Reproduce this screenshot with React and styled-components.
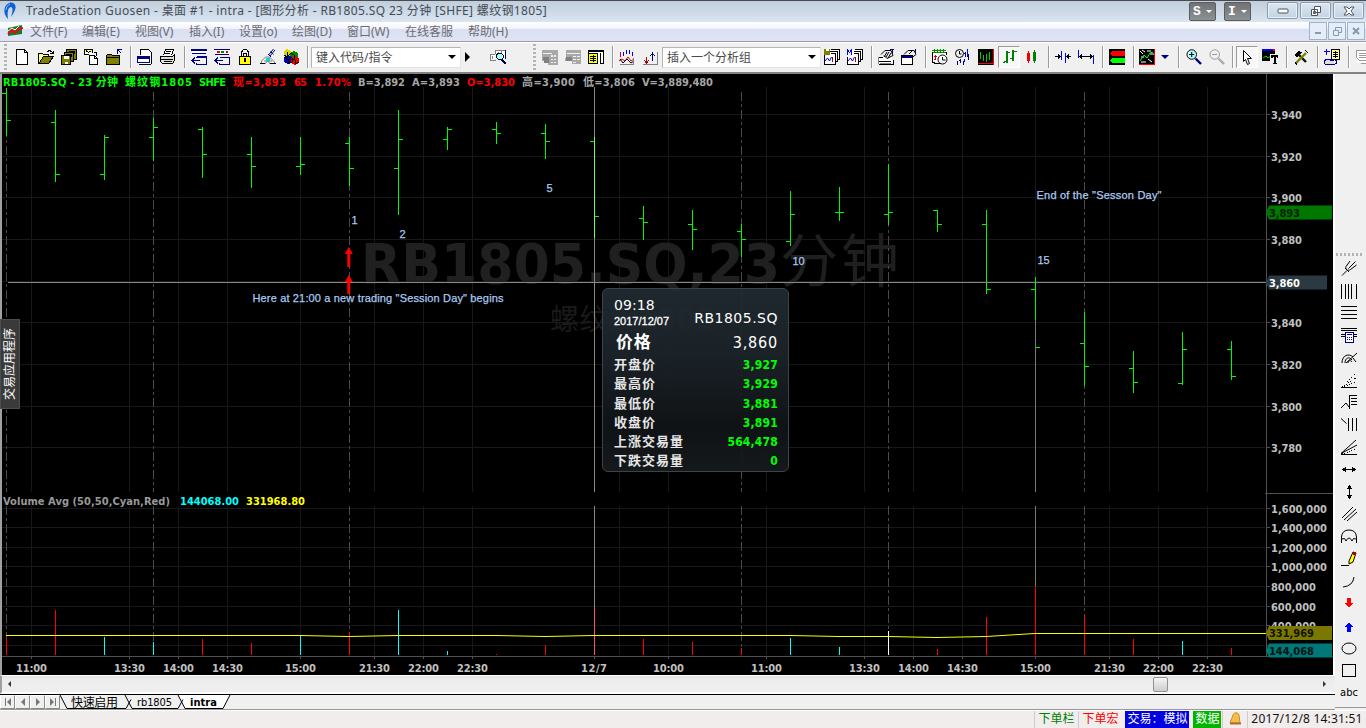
import React from "react";
import styled, { createGlobalStyle, css } from "styled-components";

const Global = createGlobalStyle`
  * { box-sizing: border-box; }
  body { margin: 0; overflow: hidden; background: #f0f0f0; }
`;

const ui = `"Noto Sans", "Noto Sans CJK SC", sans-serif`;
const tahoma = `"DejaVu Sans Condensed", "DejaVu Sans", "Noto Sans CJK SC", sans-serif`;

const Window = styled.div`
  width: 1366px;
  height: 728px;
  display: flex;
  flex-direction: column;
  overflow: hidden;
  background: #f0f0f0;
  font: 12px ${ui};
  white-space: nowrap;
`;
const TitleBar = styled.header`
  height: 22px;
  display: flex;
  flex: none;
  border-top: 1px solid #4a4a50;
  background: linear-gradient(#c0cddb, #d9e5f1);
  padding-left: 3px;
`;
const Title = styled.span`
  margin-left: 6px;
  line-height: 20px;
  color: #454b54;
  letter-spacing: ${(p) => p.$ls || 0}px;
`;
const Spacer = styled.div`
  flex: 1;
`;
const LangButton = styled.div`
  width: 27px;
  height: 19px;
  margin: 1px 8px 0 0;
  border: 1px solid #5c5c5c;
  border-radius: 2px;
  background: linear-gradient(#6f7375, #8c9193);
  color: #fff;
  display: flex;
  align-items: center;
  justify-content: center;
  gap: 5px;
  font: bold 13px "Liberation Mono", monospace;
`;
const Down = styled.i`
  width: 0;
  height: 0;
  border: ${(p) => p.$s || 3}px solid transparent;
  border-top-color: ${(p) => p.$c || "#fff"};
  border-bottom: 0;
`;
const WinButton = styled.div`
  width: 31px;
  height: 17px;
  margin: 1px 2px 0 0;
  border: 1px solid #8b9bae;
  border-radius: 2px;
  background: linear-gradient(#dbe6f1, #c3d2e2);
  box-shadow: inset 0 0 0 1px #e9f1f8;
  display: flex;
  align-items: center;
  justify-content: center;
`;
const MenuBar = styled.nav`
  height: 19px;
  flex: none;
  display: flex;
  background: linear-gradient(#ffffff, #f1f3fa 7px, #dadff2 7px, #e0e4f5);
  color: #6c6d72;
  padding-left: 7px;
`;
const MenuItem = styled.span`
  width: ${(p) => p.$w}px;
  line-height: 19px;
`;
const ChildButton = styled.div`
  width: 18px;
  height: 18px;
  margin-right: 1px;
  border: 1px solid #9fb4c8;
  background: #e5eef8;
  display: flex;
  align-items: center;
  justify-content: center;
`;
const ToolBar = styled.div`
  height: 33px;
  flex: none;
  display: flex;
  align-items: center;
  border-top: 1px solid #9a9ba3;
  border-bottom: 2px solid #828282;
  box-shadow: inset 0 1px 0 #fff;
  background: #f0f0f0;
  overflow: hidden;
`;
const Slot = styled.div`
  flex: none;
  width: ${(p) => p.$w || 16}px;
  height: ${(p) => (p.$pressed ? 22 : 16)}px;
  margin-left: ${(p) => p.$ml ?? 7}px;
  display: flex;
  align-items: center;
  justify-content: center;
  ${(p) =>
    p.$pressed &&
    css`
      background: #f8f8f8;
      border: 1px solid #9c9c9c;
      border-right-color: #fff;
      border-bottom-color: #fff;
    `}
`;
const Sep = styled.div`
  flex: none;
  width: 2px;
  height: 22px;
  margin-left: ${(p) => p.$ml ?? 8}px;
  background: linear-gradient(90deg, #9a9a9a 50%, #ffffff 50%);
`;
const Grip = styled.div`
  flex: none;
  width: ${(p) => (p.$h ? 26 : 3)}px;
  height: ${(p) => (p.$h ? 3 : 26)}px;
  margin-left: ${(p) => p.$ml || 0}px;
  margin-bottom: ${(p) => (p.$h ? 1 : 0)}px;
  background: ${(p) =>
    p.$h
      ? "repeating-linear-gradient(90deg,#b4b4b4 0 2px,#f0f0f0 2px 4px)"
      : "repeating-linear-gradient(#b4b4b4 0 2px,#f0f0f0 2px 4px)"};
`;
const Combo = styled.div`
  flex: none;
  width: ${(p) => p.$w}px;
  height: 21px;
  margin-left: ${(p) => p.$ml}px;
  padding: 0 4px 0 4px;
  display: flex;
  align-items: center;
  justify-content: space-between;
  background: #fff;
  border: 1px solid #b5b5b8;
  border-bottom-color: #e4e4e4;
  border-right-color: #e4e4e4;
  color: #4a4a4a;
`;
const Body = styled.div`
  height: 636px;
  flex: none;
  display: flex;
`;
const Main = styled.main`
  width: 1335px;
  display: flex;
  flex-direction: column;
`;
const ChartRow = styled.div`
  position: relative;
  height: 601px;
  border-left: 2px solid #a0a0a0;
  border-right: 2px solid #fff;
  background: #000;
  svg {
    display: block;
  }
`;
const AppTab = styled.div`
  position: absolute;
  left: -2px;
  top: 245px;
  width: 20px;
  height: 90px;
  background: #3a3a3a;
  border: 1px solid #4c4c4c;
  color: #fff;
  font: 12px/16px "Noto Sans CJK SC", sans-serif;
  text-align: center;
  writing-mode: vertical-rl;
  text-orientation: sideways;
  transform: rotate(180deg);
`;
const Tip = styled.section`
  position: absolute;
  left: 600px;
  top: 214px;
  width: 187px;
  height: 184px;
  border: 1px solid #3b444a;
  border-radius: 6px;
  background: linear-gradient(rgba(32, 43, 49, 0.93), rgba(28, 36, 42, 0.93) 36%, rgba(17, 20, 23, 0.93) 75%, rgba(22, 27, 29, 0.93));
  color: #fff;
  padding: 7px 10px 0 11px;
`;
const TipHead = styled.div`
  display: flex;
  height: 34px;
  justify-content: space-between;
  font-family: "DejaVu Sans", sans-serif;
`;
const TipTime = styled.div`
  font-size: 14px;
  line-height: 18px;
  letter-spacing: 0.1px;
`;
const TipDate = styled.div`
  font: 11px/14px "Liberation Sans", sans-serif;
  -webkit-text-stroke: 0.3px #fff;
`;
const TipSymbol = styled.div`
  font-size: 14px;
  line-height: 44px;
  letter-spacing: 0.5px;
`;
const TipPrice = styled.div`
  display: flex;
  justify-content: space-between;
  height: 25px;
  line-height: 26px;
  font-size: 16px;
  letter-spacing: 0.8px;
  font-family: "DejaVu Sans Condensed", sans-serif;
  b {
    font: bold 17px/22px "Noto Sans CJK SC", sans-serif;
    margin-left: 2px;
  }
`;
const TipRow = styled.div`
  display: flex;
  justify-content: space-between;
  height: 19.3px;
  font: bold 13px/17px "Noto Sans CJK SC", sans-serif;
  letter-spacing: 1px;
  color: #e6e6e6;
  b {
    color: #0f0;
    font: bold 12px/21px "DejaVu Sans Condensed", sans-serif;
    letter-spacing: 0.2px;
  }
`;
const ScrollBar = styled.div`
  height: 19px;
  border-left: 2px solid #a0a0a0;
  border-top: 1px solid #fff;
  border-bottom: 2px solid #fff;
  background: linear-gradient(#e3e3e3, #ededed 30%, #efefef);
  display: flex;
  align-items: center;
  padding: 0 9px 0 6px;
`;
const Thumb = styled.div`
  width: 15px;
  height: 15px;
  margin-right: 155px;
  border: 1px solid #929292;
  border-radius: 2px;
  background: linear-gradient(#f6f6f6, #e0e0e0 50%, #cfcfcf);
`;
const Side = styled.i`
  width: 0;
  height: 0;
  border: 3px solid transparent;
  ${(p) =>
    p.$left
      ? "border-right-color:#333;border-left:0;"
      : "border-left-color:#333;border-right:0;"}
  ${(p) => p.$big && "border-width:5px 0 5px 5px;border-left-color:#000;"}
`;
const TabStrip = styled.div`
  height: 16px;
  border-top: 1px solid #000;
  border-bottom: 1px solid #999;
  display: flex;
  font: 11px/15px ${tahoma};
  svg {
    display: block;
    flex: none;
  }
`;
const TabNav = styled.div`
  width: 15px;
  height: 14px;
  border: 1px solid #fff;
  border-right-color: #8a8a8a;
  border-bottom-color: #8a8a8a;
  display: flex;
  align-items: center;
  justify-content: center;
`;
const SideBar = styled.aside`
  width: 31px;
  height: 634px;
  border-bottom: 1px solid #999;
  padding: 179px 3px 0 0;
  display: flex;
  flex-direction: column;
  align-items: center;
`;
const SideTool = styled.div`
  height: 22.35px;
  flex: none;
  display: flex;
  align-items: center;
  font: 11px ${tahoma};
`;
const StatusBar = styled.footer`
  height: 18px;
  flex: none;
  border-top: 1px solid #fff;
  background: #f1edec;
  display: flex;
  justify-content: flex-end;
`;
const Cell = styled.div`
  width: ${(p) => p.$w}px;
  margin-left: ${(p) => p.$ml || 0}px;
  color: ${(p) => p.$c || "#111"};
  background: ${(p) => p.$bg || "none"};
  border-left: 1px solid ${(p) => (p.$bg ? "transparent" : "#d0cccb")};
  line-height: 16px;
  text-align: center;
  letter-spacing: ${(p) => p.$ls || 0}px;
  overflow: hidden;
`;

const K = "#000";
const N = "#000080";
const G = "#808080";
const O = "#808000";
const Y = "#ffff00";

/* Each entry: [kind, colour, path]; "f" fills, "s" strokes crisply, "r" strokes smoothly, "w" is wide, "d" is dotted. */
const glyphs = {
  page: [["f", "#fff", "M2 1h8l3 3v11H2z"], ["s", K, "M2.500 .5h8l3 3v12h-11zM10.500 .5v3h3"]],
  open: [["f", "#ffff9c", "M1 4h4l1 1h5v3H5l-4 6z"], ["f", O, "M5 8h10l-4 6H1z"], ["s", K, "M.5 14.500V4.500h4l1 1h5v2M.5 14.500h10l5-7h-10l-4.500 7M9.500 2.500l2-1 2 1 1 1.500M12 4.500h3v-3"]],
  saveall: [["f", O, "M6 1h10v9H6zM3 4h10v9H3zM0 7h10v8H0z"], ["s", K, "M5.500 3.500v-3h10v10h-3M3 6.500v-3h9.500v9h-3M.5 6.500h9v9h-9zM7.500 2.500h6v2M4.500 5.500h6v2"], ["f", "#fff", "M3 7h5v3H3zM4 13h3v2H4z"]],
  paste: [["f", "#fff", "M1 1h8v5H1zM6 6h5l3 3v6H6z"], ["f", Y, "M1 1h3v2H1zM6 1h2v2H6z"], ["s", K, "M.5 5.500v-5h8v3M.5 5.500h4M2 1.500l2.500 2 3-2M9.500 3.500h3v3M5.500 6.500h5l3 3v6h-8zM10.500 6.500v3h3"]],
  folder: [["f", O, "M0 6h13v9H0z"], ["s", K, "M.5 15V6.500l1-1h4l1 1h7v8.500zM1 8.500h12"], ["s", N, "M11.500 4.500v-4h4M11.500 .5l4 4"]],
  template: [["f", "#fff", "M2 1h10l3 3v11H2z"], ["s", K, "M3.500 6V.5h8l3 3V15M2 15.500h12"], ["f", N, "M0 7h13v3H0z"], ["s", N, "M.5 7.500h12v6H.5z"]],
  print: [["f", "#fff", "M5 1h8l-2 6H3z"], ["f", "#ddd", "M1 7h13v6H1z"], ["s", K, "M3.500 6.500l2-6h8l-2 6M.5 7.500h12l2-2v6l-2 3H2.500l-2-2zM1 10.500h12M6 2.500h5M5 4.500h5M4 12.500h8"], ["f", Y, "M10 11h2v1h-2z"]],
  winA: [["f", "#fff", "M1 1h15v3H1z"], ["s", N, "M0 .5h16M0 1.500h16M1 4.500h14M5.500 7.500h9.500v8H5.500v-2M5 8.500h10M9 11.500H1M4 8.500l-3 3 3 3"]],
  winB: [["f", "#fff", "M1 1h15v4H1z"], ["s", N, "M0 .5h16M1 5.500h14M5.500 8.500h9.500v7H5.500v-2M9 11.500H1M4 8.500l-3 3 3 3"], ["f", "#f00", "M3 2h3v2H3z"], ["f", "#080", "M7 2h3v2H7z"], ["f", "#d00", "M12 2h2v2h-2z"]],
  lock: [["f", Y, "M3 7h10v8H3z"], ["s", K, "M4.500 7V3l2-2.500h3l2 2.500v4M6.500 7V4h3v3M2.500 7.500h11v8h-11z"], ["f", K, "M7 9h2v4H7z"]],
  pen: [["r", G, "M1.500 15V12l4-4h4l5 5v2M4 12h8M6 9l4 6M10 9l-5 6"], ["s", K, "M0 14.500h5M10 14.500h6"], ["r", N, "M8.500 6l5-6M10 7l5-6M8 5l3 3M10.500 2.500l3 3"], ["f", "#00d8d8", "M6 9h4v3H6z"]],
  cubes: [["f", "#d8d800", "M1 2l3-2 4 2v4L4 8 1 6z"], ["f", "#080", "M7 4l4-2 4 2v5l-4 2-4-2z"], ["f", "#00a", "M1 8l4-2 4 2v5l-4 2-4-2z"], ["f", "#e00", "M8 9l4-2 4 2v5l-4 2-4-2z"], ["s", K, "M1 6l3 2 3-3M1 8l4 2v5l4-2V9M7 4l4 2v4M8 10l4 1v4l4-2M4 3v4"]],
  search: [["f", "#fff", "M0 5h5v6H0zM6 1h9v9H6z"], ["s", G, "M.5 5.500h4M.5 5v6h5M2.500 7v3M5.500 5V1.500h9.500M8 4.500v-2M11 4v-2"], ["s", N, "M15.500 .5v9"], ["f", "#9ff", "M7 5h5v5H7z"], ["s", K, "M7.500 4.500h4l2 2v2l-2 2h-3l-2-2v-2zM12 10.500l4 4"], ["s", N, "M11 10.500l4 4"]],
  calG: [["f", "#a8a8a8", "M0 1h16v15H6v-4H0z"], ["f", "#f0f0f0", "M1 4h9v1H1zM9 6h2v2H9zM12 6h2v2h-2zM9 10h2v1H9zM12 10h2v1h-2zM9 13h2v1H9zM12 13h2v1h-2z"], ["f", G, "M1 8h6v6H2z"]],
  calG2: [["f", "#a8a8a8", "M1 1h15v14H7v-3H0V9h1z"], ["f", "#f0f0f0", "M2 4h13v1H2zM8 7h3v1H8zM12 7h3v1h-3zM8 10h3v1H8zM12 10h3v1h-3zM8 13h3v1H8z"], ["f", G, "M1 8h6v4H1z"]],
  cal: [["f", "#fff", "M1 1h14v14H1z"], ["f", Y, "M1 5h8v9H1z"], ["s", K, "M.5 4.500h9v10h-9zM.5 4V1.500h15v13h-4M0 2.500h16M2 7.500h6M2 9.500h6M2 11.500h6M5.500 6v7M12.500 4v10"]],
  wave: [["s", "#00f", "M4.500 3v4M7.500 1v4M10.500 1v4M13.500 3v4"], ["s", "#d00", "M1.500 3v5"], ["r", "#d00", "M0 12l3-2 3 2 3-4 3 4 3-2"], ["r", K, "M1 10l3 4 4-4 4 4 3-2"], ["s", G, "M14.500 9v6.500H1"]],
  arrows: [["s", "#a00", "M4.500 8v6M2.500 11.500l2 3 2-3"], ["s", N, "M10.500 12V4M8.500 7l2-3 2 3"], ["s", G, "M15.500 3v12.500H1"]],
  grpS: [["f", "#fff", "M5 1h10v10H5zM1 7h10v8H1z"], ["s", K, "M7 .5h8.500v10h-2M5 2.500h8.500v10h-2M.5 6v9.500h11v-11h-5"], ["f", O, "M0 0h6v6H0z"], ["f", "#fff", "M2 0h3v2H2z"], ["r", "#00f", "M1 12l2.500-3 2 3 2-4"], ["s", "#a00", "M8.500 8v5"]],
  grpM: [["f", "#fff", "M5 1h10v10H5zM1 7h10v8H1z"], ["s", K, "M8 .5h7.500v10h-2M7 2.500h6.500v10h-2M.5 8v7.500h11v-11h-5"], ["s", "#00f", "M.5 6V.5l2 3 2-3V6"], ["r", "#00f", "M1 12l2.500-3 2 3 2-4"], ["s", "#a00", "M8.500 8v5"]],
  prop1: [["f", "#fff", "M0 8h14v7H0z"], ["s", K, "M1 8.500h4M1 15.500h14v-5M1 12.500h12"], ["r", K, "M3 5.500l4-4h6l2 5-6 3-3-3M6 8l3-5M8 8l3-5M10 9l3-5"], ["s", N, "M14.500 0v5M12 .5h4"], ["s", G, "M.5 8v7M2 14.500h11"]],
  prop2: [["f", "#fff", "M1 6h10v9H1z"], ["s", K, "M.5 6.500h11v9H.5z"], ["r", K, "M3 5.500l4-4h6l2 4-4 3-4-2M8 5l4-4"], ["s", N, "M14.500 0v5M1 7.500h10M1 8.500h10"]],
  calClock: [["f", "#fff", "M1 3h13v9H1z"], ["s", "#080", "M0 1.500h14M1 3.500h13M2.500 0v4M5.500 0v4M8.500 0v4M11.500 0v4"], ["s", K, "M.5 3v10l3 1.500h5M14.500 3v3"], ["s", "#d00", "M2 7.500h3M3.500 6v5M2 10.500h2"], ["r", K, "M6 10.500a4.500 4.500 0 1 0 9 0a4.500 4.500 0 1 0-9 0M10.500 8v3h3"]],
  clockBars: [["r", K, "M.5 4.500a4 4 0 1 0 8 0a4 4 0 1 0-8 0M4.500 2v3h2"], ["s", N, "M10.500 3v5M13.500 5v6M2.500 12v4M5.500 10v4M8.500 12v4M12 7.500h2M9 4.500h2M4 11.500h2"], ["s", "#00f", "M12.500 0v7M9.500 10v3"]],
  barsR: [["f", K, "M0 0h16v16H0z"], ["s", "#0c0", "M2.500 3v7M5.500 6v6M8.500 5v8M11.500 3v8"], ["s", "#f00", "M0 14.500h16M15.500 0v16"]],
  bars: [["s", "#008000", "M5.500 2v12M6.500 2v12M3 12.500h3M6 3.500h3M11.500 1v11M12.500 1v11M9 9.500h3M12 2.500h4M2 13.500h2"]],
  candles: [["f", "#e00", "M3 4h3v8H3z"], ["f", "#008000", "M9 3h3v9H9z"], ["s", "#e00", "M4.500 2v12"], ["s", "#008000", "M10.500 1v13"]],
  narrow: [["s", "#00f", "M6.500 2v9M10.500 4v10"], ["s", K, "M0 7.500h5M3 5.500l2 2-2 2M16 7.500h-4M14 5.500l-2 2 2 2"]],
  wide: [["s", "#00f", "M.5 1v8M15.500 6v9"], ["s", K, "M2 7.500h12M4 5.500l-2 2 2 2M12 5.500l2 2-2 2"]],
  flags: [["f", K, "M0 0h16v16H0z"], ["f", "#f00", "M3 2h13v5H3L1 4.500z"], ["f", "#0f0", "M3 9h13v5H3L1 11.500z"]],
  trend: [["f", K, "M0 0h16v16H0z"], ["r", "#fff", "M1 2l3 3M3 1l3 2M8 2h4M2 8h3M9 10l4 3M2 13h5M11 5h4"], ["r", "#0f0", "M1 12l4-6 3 3 3-5 3-1"], ["s", "#f00", "M0 15.500h16M15.500 0v16"]],
  zoomIn: [["f", "#9ff", "M3 2h6v7H3z"], ["r", K, "M1 5.500a4.700 4.700 0 1 0 9.500 0a4.700 4.700 0 1 0-9.500 0M5.700 3v5M3.200 5.500h5"], ["w", N, "M9.500 9.500l5.500 5.500"]],
  zoomOut: [["r", "#999", "M1 5.500a4.700 4.700 0 1 0 9.500 0a4.700 4.700 0 1 0-9.500 0M3.200 5.500h5"], ["w", "#aaa", "M9.500 9.500l5.500 5.500"]],
  cursor: [["f", "#fff", "M4.500 1.500l8 8h-4l2 5-2 1-2-5-2 2z"], ["r", K, "M4.500 1.500l8 8h-4l2 5-2 1-2-5-2 2z"]],
  textTool: [["f", K, "M0 0h13v12H0z"], ["f", "#00f", "M0 0h13v2H0z"], ["f", "#f00", "M11 0h2v2h-2z"], ["r", "#0d0", "M1 9l3-2 2 2 3-2"], ["f", "#f0f0f0", "M8 5h8v11H8z"], ["f", K, "M9 6h7v3h-1l-1-1v6h1v1h-4v-1h1V8l-2 1H9z"]],
  hammer: [["w", "#111", "M4 4l9 9"], ["f", K, "M1 6l4-4 4 1-5 5z"], ["w", O, "M13 4L3 14"], ["s", K, "M12 1.500l3 2M2 13.500l2 2"]],
  addPage: [["f", "#ffffa0", "M8 1h7v9H8z"], ["s", K, "M7.500 .5h8v10h-8zM9 3.500h5M9 5.500h5M9 7.500h5M11.500 2v7"], ["s", "#00f", "M2.500 0v6M0 2.500h6"], ["f", "#ddd", "M1 10h9v5H1z"], ["s", N, "M.5 14.500V12l2-2h7l3 2v2l-2 1.500H.5M6 11.500h4"]],
  pageG: [["f", "#fff", "M1 2h15v12H1z"], ["s", "#999", "M.5 1.500h15v10h-12l-3-3zM3 4.500h12M3 6.500h12M3 8.500h12M5 14.500h11"]],
};
const sideGlyphs = {
  fork: [["r", K, "M1 15.500L6 10.500M9 1l-4 5.500c-1 3 2 5 4.500 3L15.500 5M7.500 8.500l7-7"], ["r", K, "M4 8l4 4"]],
  vlines: [["s", K, "M.5 1v15M4.500 1v15M7.500 1v15M10.500 1v15M15.500 1v15"]],
  hlines: [["s", K, "M0 1.500h16M0 5.500h16M0 9.500h16M0 13.500h16"]],
  calc: [["s", K, "M0 1.500h16M0 3.500h16M0 7.500h16M0 9.500h4M13 9.500h3"], ["f", "#fff", "M4 5h9v11H4z"], ["s", N, "M4.500 5.500h8v10h-8zM6 7.500h5M6 10.500h1M8 10.500h1M10 10.500h1M6 12.500h1M8 12.500h1M10 12.500h1"]],
  arcs: [["r", K, "M1 13c0-8 7-10 11-6M4 13c0-5 4-7 7-3M7 13c0-3 3-3 4-1M5 13L16 3M12 8l3 4"]],
  fan: [["s", K, "M0 15.500h16"], ["d", K, "M1 15L15 1M1 15L15 6M1 15L15 10"]],
  steps: [["r", K, "M0 14l5-5 3 4"], ["s", K, "M8.500 15V1.500h7M10 4.500h6M10 7.500h6M10 10.500h6"]],
  timeext: [["r", K, "M0 1.500l5.500 5"], ["s", K, "M7.500 1v13M11.500 1v13M15.500 1v13"]],
  gann: [["r", K, "M0 14.500L15 1M0 14.500L16 6"], ["s", K, "M0 15.500h16"], ["d", K, "M1 15L15 10"]],
  hor: [["r", K, "M2 8.500h12"], ["f", K, "M1 8.500l4-3v6zM15 8.500l-4-3v6z"]],
  ver: [["r", K, "M8.500 2v12"], ["f", K, "M8.500 1l3 4h-6zM8.500 15l3-4h-6z"]],
  parallel: [["r", K, "M1 12L12 1M3 14L15 3M6 15L16 6"]],
  cycle: [["r", K, "M.5 15V9q.5-7 7.500-7t7.500 7v6M1 11q3-2 4 2 3-6 6 0 1-4 4-2"]],
  pencil: [["s", K, "M0 14.500h8"], ["f", Y, "M8 10l4-9 3 1-3 9-4 3z"], ["r", K, "M8 13v-3l4-9 3 1-3 9z"], ["f", "#a00", "M12 1h3v3h-3z"]],
  curve: [["r", K, "M2 14q10-1 11-10"]],
  down: [["f", "#f00", "M6 3h4v5h2l-4 5-4-5h2z"]],
  up: [["f", "#00f", "M6 14h4V9h2L8 4 4 9h2z"]],
  oval: [["r", K, "M1 8.500a7 5.500 0 1 0 14 0a7 5.500 0 1 0-14 0"]],
  rect: [["s", K, "M1.500 2.500h13v12h-13z"]],
};

const Icon = ({ shapes, size = 16 }) => (
  <svg width={size} height={size} viewBox="0 0 16 16">
    {shapes.map(([kind, color, d], i) => (
      <path
        key={i}
        d={d}
        fill={kind === "f" ? color : "none"}
        stroke={kind === "f" ? "none" : color}
        strokeWidth={kind === "w" ? 2.4 : 1}
        strokeDasharray={kind === "d" ? "1 1.5" : undefined}
        shapeRendering={kind === "r" || kind === "w" ? "auto" : "crispEdges"}
      />
    ))}
  </svg>
);

const Tool = ({ name, ml, w, pressed }) => (
  <Slot $ml={ml} $w={pressed ? 22 : w} $pressed={pressed}>
    <Icon shapes={glyphs[name]} />
  </Slot>
);

const FIRST_X = 6.5;
const STEP = 49;
/* high, low, open, close, volume top, volume colour */
const bars = [
  [88, 136, 93, 120, 638, "#f00"],
  [110, 182, 122, 174, 610, "#f00"],
  [135, 180, 174, 137, 637, "#0ff"],
  [118, 161, 137, 127, 642, "#0ff"],
  [127, 178, 129, 154, 639, "#f00"],
  [137, 188, 154, 166, 643, "#f00"],
  [137, 175, 166, 164, 635, "#0ff"],
  [137, 186, 143, 168, 632, "#f00"],
  [110, 215, 168, 139, 610, "#0ff"],
  [127, 150, 139, 129, 651, "#0ff"],
  [122, 144, 129, 133, 654, "#f00"],
  [124, 159, 133, 141, 645, "#f00"],
  [137, 238, 141, 216, 608, "#f55"],
  [206, 240, 218, 222, 639, "#f00"],
  [210, 250, 224, 229, 642, "#f00"],
  [224, 257, 231, 239, 648, "#f00"],
  [191, 246, 241, 214, 638, "#0ff"],
  [187, 221, 212, 212, 647, "#0ff"],
  [164, 225, 214, 212, 631, "#fff"],
  [210, 232, 210, 224, 649, "#f00"],
  [210, 294, 224, 289, 617, "#f00"],
  [277, 492, 289, 347, 586, "#f00"],
  [312, 386, 343, 366, 615, "#f00"],
  [351, 393, 368, 382, 639, "#f00"],
  [332, 385, 383, 349, 641, "#0ff"],
  [341, 380, 349, 376, 648, "#f00"],
];
const times = [
  [31, "11:00"], [129, "13:30"], [178, "14:00"], [227, "14:30"], [300, "15:00"],
  [374, "21:30"], [423, "22:00"], [472, "22:30"], [594, "12/7"], [668, "10:00"],
  [766, "11:00"], [864, "13:30"], [913, "14:00"], [962, "14:30"], [1035, "15:00"],
  [1109, "21:30"], [1158, "22:00"], [1207, "22:30"],
];
const gridX = [31, 129, 178, 227, 300, 374, 423, 472, 619, 668, 766, 864, 913, 962, 1035, 1109, 1158, 1207];
const prices = [
  [114, "3,940"], [156, "3,920"], [197, "3,900"], [239, "3,880"], [281, ""],
  [322, "3,840"], [364, "3,820"], [406, "3,800"], [447, "3,780"],
];
const volumes = [
  [508, "1,600,000", 56], [527, "1,400,000", 56], [547, "1,200,000", 56], [566, "1,000,000", 56],
  [586, "800,000", 45], [606, "600,000", 45], [625, "400,000", 45], [645, "", 0],
];
const sessions = [6, 153, 349, 741, 888, 1084];
const quote = [
  [3, 115, "#0f0", "RB1805.SQ - 23 分钟"],
  [125, 67, "#0f0", "螺纹钢1805"],
  [199, 27, "#0f0", "SHFE"],
  [233, 53, "#f00", "现=3,893"],
  [294, 13, "#f00", "65"],
  [315, 36, "#f00", "1.70%"],
  [358, 47, "#a6a6a6", "B=3,892"],
  [412, 48, "#a6a6a6", "A=3,893"],
  [467, 48, "#f00", "O=3,830"],
  [522, 53, "#a6a6a6", "高=3,900"],
  [583, 52, "#a6a6a6", "低=3,806"],
  [642, 71, "#a6a6a6", "V=3,889,480"],
];
const notes = [
  [351, 220, 0, "1"], [399, 234, 0, "2"], [546, 188, 0, "5"], [792, 261, 12, "10"], [1037, 260, 12, "15"],
  [252, 298, 251, 'Here at 21:00 a new trading "Session Day" begins'],
  [1036, 195, 125, 'End of the "Sesson Day"'],
];

const Label = ({ x, y, w, fill = "#c0c0c0", size = 11, weight = "bold", family = tahoma, stretch, outline, children }) => (
  <text
    x={x}
    y={y}
    fill={fill}
    fontFamily={family}
    fontSize={size}
    fontWeight={weight}
    textLength={w || undefined}
    lengthAdjust={stretch ? "spacingAndGlyphs" : "spacing"}
    stroke={outline ? fill : "none"}
    strokeWidth={outline || 0}
  >
    {children}
  </text>
);

const PriceTag = ({ y, x2, fill, ink, w, text }) => (
  <>
    <path d={`M1266 ${y + 7}l3-7H${x2}v14H1269z`} fill={fill} />
    <Label x={1269} y={y + 11} w={w} fill={ink}>{text}</Label>
  </>
);

const Chart = () => (
  <svg width="1331" height="601" viewBox="2 74 1331 601">
    <g stroke="#181818" shapeRendering="crispEdges">
      {prices.map(([y]) => <path key={y} d={`M2 ${y + 0.5}H1265`} />)}
      {volumes.map(([y]) => <path key={y} d={`M2 ${y + 0.5}H1265`} />)}
      {gridX.map((x) => <path key={x} d={`M${x + 0.5} 87V492M${x + 0.5} 506V655`} />)}
    </g>
    <Label x={361} y={282.5} w={419} size={55} fill="#202020" stretch>RB1805.SQ,23</Label>
    <Label x={780} y={282} w={119} size={58} weight="400" fill="#1f1f1f" family='"Noto Sans CJK SC", sans-serif'>分钟</Label>
    <Label x={550} y={330} w={88} size={29} weight="400" fill="#1a1a1a" family='"Noto Sans CJK SC", sans-serif'>螺纹钢</Label>
    <Label x={638} y={329} w={77} size={28} fill="#1c1c1c" stretch>1805</Label>
    <g stroke="#4a4a4a" strokeDasharray="9 3 3 3" shapeRendering="crispEdges">
      {sessions.map((x) => <path key={x} d={`M${x + 0.5} 92V492M${x + 0.5} 506V655`} />)}
    </g>
    <g stroke="#505050" shapeRendering="crispEdges">
      <path d="M2 656.500H1333M1266.500 74V656M1265 493.500H1333" />
      {prices.map(([y]) => <path key={y} d={`M1267 ${y + 0.5}h3`} />)}
      {volumes.map(([y]) => <path key={y} d={`M1267 ${y + 0.5}h3`} />)}
      {times.map(([x]) => <path key={x} d={`M${x + 0.5} 657v2`} />)}
    </g>
    <path d="M1035.500 290V492M1035.500 506V590" stroke="#777" shapeRendering="crispEdges" />
    <g stroke="#00f800" shapeRendering="crispEdges">
      {bars.map(([h, l, o, c], i) => {
        const x = FIRST_X + i * STEP;
        const low = i === 21 ? 320 : l;
        return <path key={i} d={`M${x} ${h}V${low}M${x - 4.5} ${o + 0.5}h4.500M${x} ${c + 0.5}h4.500`} />;
      })}
    </g>
    <g shapeRendering="crispEdges">
      {bars.map((b, i) => (
        <path key={i} d={`M${FIRST_X + i * STEP} ${b[4]}V655`} stroke={b[5]} />
      ))}
    </g>
    <path
      d="M6 635.500H300L349 636.500L398 635.500H496L545 636.500L594 635.500H790L839 636.500H888L937 637.500L986 636.500L1035 633.500H1266"
      fill="none" stroke="#ff0"
    />
    <g shapeRendering="crispEdges" stroke="#888">
      <path d="M8 282.500H1266M594.500 87V492M594.500 506V608" />
      <path d="M594.500 137V238" stroke="#6f6" />
    </g>
    <path
      d="M348.800 247l4 7h-2.500v13h-3v-13h-2.500zM348.800 275l4 7h-2.500v12h-3v-12h-2.500z"
      fill="#f00"
    />
    {notes.map(([x, y, w, t]) => (
      <Label key={t} x={x + 0.5} y={y + 4} w={w} weight="normal" fill="#a9c9f0" outline={0.25} family='"Liberation Sans", sans-serif'>{t}</Label>
    ))}
    {quote.map(([x, w, c, t]) => <Label key={x} x={x} y={86} w={w} fill={c}>{t}</Label>)}
    <Label x={3} y={505} w={167} fill="#999">Volume Avg (50,50,Cyan,Red)</Label>
    <Label x={180} y={505} w={59} fill="#0ff">144068.00</Label>
    <Label x={246} y={505} w={59} fill="#ff0">331968.80</Label>
    {prices.map(([y, t]) => t && <Label key={y} x={1271} y={y + 5} w={31}>{t}</Label>)}
    {volumes.map(([y, t, w]) => t && <Label key={y} x={1271} y={y + 5} w={w}>{t}</Label>)}
    {times.map(([x, t]) => (
      <Label key={x} x={x - (t === "12/7" ? 13 : 15)} y={672} w={t === "12/7" ? 26 : 31}>{t}</Label>
    ))}
    <PriceTag y={205.5} x2={1332} fill="#007800" ink="#002000" w={31} text="3,893" />
    <PriceTag y={275.5} x2={1327} fill="#2b3a42" ink="#fff" w={31} text="3,860" />
    <PriceTag y={626} x2={1332} fill="#7a7800" ink="#141400" w={45} text="331,969" />
    <PriceTag y={643.5} x2={1332} fill="#007878" ink="#001414" w={45} text="144,068" />
  </svg>
);

const tipRows = [
  ["开盘价", "3,927"], ["最高价", "3,929"], ["最低价", "3,881"],
  ["收盘价", "3,891"], ["上涨交易量", "564,478"], ["下跌交易量", "0"],
];
const DataTip = () => (
  <Tip>
    <TipHead>
      <div>
        <TipTime>09:18</TipTime>
        <TipDate>2017/12/07</TipDate>
      </div>
      <TipSymbol>RB1805.SQ</TipSymbol>
    </TipHead>
    <TipPrice><b>价格</b>3,860</TipPrice>
    {tipRows.map(([k, v]) => <TipRow key={k}>{k}<b>{v}</b></TipRow>)}
  </Tip>
);

const menus = [
  ["文件(F)", 52], ["编辑(E)", 53], ["视图(V)", 54], ["插入(I)", 50], ["设置(o)", 53],
  ["绘图(D)", 55], ["窗口(W)", 58], ["在线客服", 63], ["帮助(H)", 50],
];

const WindowTabs = () => (
  <TabStrip>
    {["M8 1v8L4 5zM2 1h1v8H2z", "M7 1v8L3 5z", "M3 1v8l4-4z", "M2 1v8l4-4zM7 1h1v8H7z"].map((d) => (
      <TabNav key={d}><svg width="10" height="10"><path d={d} fill="#777" /></svg></TabNav>
    ))}
    <svg width="175" height="15" viewBox="60 0 175 15">
      <path d="M178 0l7 14h38l7-14z" fill="#fff" />
      <path d="M60 0l7 13.500h59l5-9M125 0l7 13.500h46l5-9M178 0l7 13.500h38L230 0" fill="none" stroke="#000" />
      <Label x={71} y={12} w={47} size={12} weight="normal" fill="#000">快速启用</Label>
      <Label x={137} y={11} w={35} weight="normal" fill="#000">rb1805</Label>
      <Label x={190} y={11} w={27} fill="#000">intra</Label>
    </svg>
  </TabStrip>
);

const sideOrder = ["fork", "vlines", "hlines", "calc", "arcs", "fan", "steps", "timeext", "gann", "hor", "ver", "parallel", "cycle", "pencil", "curve", "down", "up", "oval", "rect"];

export default function App() {
  return (
    <Window>
      <Global />
      <TitleBar>
        <svg width="17" height="19" viewBox="0 0 17 19">
          <path d="M5 18C0 13 0 5 6 2c5-2 8 3 6 7-1 3-3 5-4 7 1-4 3-9 0-10C5 6 4 11 5 18z" fill="#0f5fd8" />
          <path d="M3 9c0-3 2-5 4-6" stroke="#7fc4ff" fill="none" />
        </svg>
        <Title $ls={0.35}>TradeStation Guosen - 桌面 #1 - intra - [图形分析 - RB1805.SQ 23 分钟 [SHFE] 螺纹钢1805]</Title>
        <Spacer />
        <LangButton>S<Down /></LangButton>
        <LangButton>I<Down /></LangButton>
        <Slot $ml={7} $w={1} />
        <WinButton><svg width="12" height="6"><rect x="1" y="1" width="10" height="4" rx="1" fill="#fff" stroke="#4d545c" /></svg></WinButton>
        <WinButton>
          <svg width="12" height="12" fill="#fff" stroke="#4d545c"><path d="M4.500 1.500h6v6h-6zM1.500 4.500h6v6h-6zM3.500 6.500h2v2h-2z" /></svg>
        </WinButton>
        <WinButton>
          <svg width="12" height="10"><path d="M1 1h3l2 2 2-2h3L8 5l3 4H8L6 7 4 9H1l3-4z" fill="#fff" stroke="#4d545c" /></svg>
        </WinButton>
      </TitleBar>
      <MenuBar>
        <svg width="23" height="19" viewBox="0 0 23 19">
          <path d="M1 6l14-3v9L1 14z" fill="#177a2e" />
          <path d="M1 12l4-4 3 3 3-4 5-1" fill="none" stroke="#d11" strokeWidth="2" />
          <path d="M1 9l4-3 3 2 4-4" fill="none" stroke="#fff" />
        </svg>
        {menus.map(([t, w]) => <MenuItem key={t} $w={w}>{t}</MenuItem>)}
        <Spacer />
        <ChildButton><svg width="8" height="8"><path d="M1 6h6" stroke="#8899aa" strokeWidth="2" /></svg></ChildButton>
        <ChildButton><svg width="9" height="9" fill="none" stroke="#8899aa"><path d="M2.500 3V.5h6v5H6M.5 3.500h5v5h-5z" /></svg></ChildButton>
        <ChildButton><svg width="8" height="8"><path d="M1 1l6 6M7 1L1 7" stroke="#8899aa" strokeWidth="2" /></svg></ChildButton>
      </MenuBar>
      <ToolBar>
        <Grip $ml={4} />
        <Tool name="page" ml={7} /><Tool name="open" ml={8} /><Tool name="saveall" /><Tool name="paste" /><Tool name="folder" ml={6} />
        <Sep />
        <Tool name="template" ml={5} /><Tool name="print" />
        <Sep />
        <Tool name="winA" ml={5} /><Tool name="winB" /><Tool name="lock" /><Tool name="pen" /><Tool name="cubes" />
        <Sep />
        <Combo $w={150} $ml={2}>键入代码/指令<Down $c="#000" $s={4} /></Combo>
        <Slot $ml={2} $w={8}><Side $big /></Slot>
        <Tool name="search" ml={19} />
        <Grip $ml={27} />
        <Tool name="calG" ml={6} /><Tool name="calG2" /><Tool name="cal" />
        <Sep />
        <Tool name="wave" ml={5} /><Tool name="arrows" />
        <Combo $w={159} $ml={4}>插入一个分析组<Down $c="#000" $s={4} /></Combo>
        <Tool name="grpS" ml={3} /><Tool name="grpM" />
        <Sep />
        <Tool name="prop1" ml={5} /><Tool name="prop2" />
        <Sep />
        <Tool name="calClock" ml={5} /><Tool name="clockBars" /><Tool name="barsR" /><Tool name="bars" ml={4} pressed /><Tool name="candles" ml={4} />
        <Sep />
        <Tool name="narrow" ml={5} /><Tool name="wide" />
        <Sep />
        <Tool name="flags" ml={5} />
        <Sep />
        <Tool name="trend" ml={4} />
        <Slot $ml={6} $w={8}><Down $c={N} $s={4} /></Slot>
        <Sep $ml={9} />
        <Tool name="zoomIn" ml={6} /><Tool name="zoomOut" />
        <Sep $ml={7} />
        <Tool name="cursor" ml={2} pressed /><Tool name="textTool" ml={4} />
        <Sep />
        <Tool name="hammer" ml={5} />
        <Sep />
        <Tool name="addPage" ml={5} />
        <Sep />
        <Tool name="pageG" ml={6} />
      </ToolBar>
      <Body>
        <Main>
          <ChartRow>
            <Chart />
            <AppTab>交易应用程序</AppTab>
            <DataTip />
          </ChartRow>
          <ScrollBar><Side $left /><Spacer /><Thumb /><Side /></ScrollBar>
          <WindowTabs />
        </Main>
        <SideBar>
          <Grip $h />
          {sideOrder.map((n) => <SideTool key={n}><Icon shapes={sideGlyphs[n]} /></SideTool>)}
          <SideTool>abc</SideTool>
        </SideBar>
      </Body>
      <StatusBar>
        <Cell $w={44} $c="#008000">下单栏</Cell>
        <Cell $w={44} $c="#f00">下单宏</Cell>
        <Cell $w={64} $ml={3} $bg="#0000e0" $c="#fff">交易：模拟</Cell>
        <Cell $w={28} $ml={4} $bg="#00b400" $c="#fff">数据</Cell>
        <Cell $w={25} $ml={1}>
          <svg width="14" height="15" viewBox="0 0 14 15"><path d="M2 12l3-8c1-3 5-3 6 0l1 8z" fill="#f2bd4a" stroke="#d08a20" /><path d="M2 12.500h11" stroke="#b06a30" strokeWidth="2" /></svg>
        </Cell>
        <Cell $w={119} $ls={0.2}>2017/12/8 14:31:51</Cell>
      </StatusBar>
    </Window>
  );
}
